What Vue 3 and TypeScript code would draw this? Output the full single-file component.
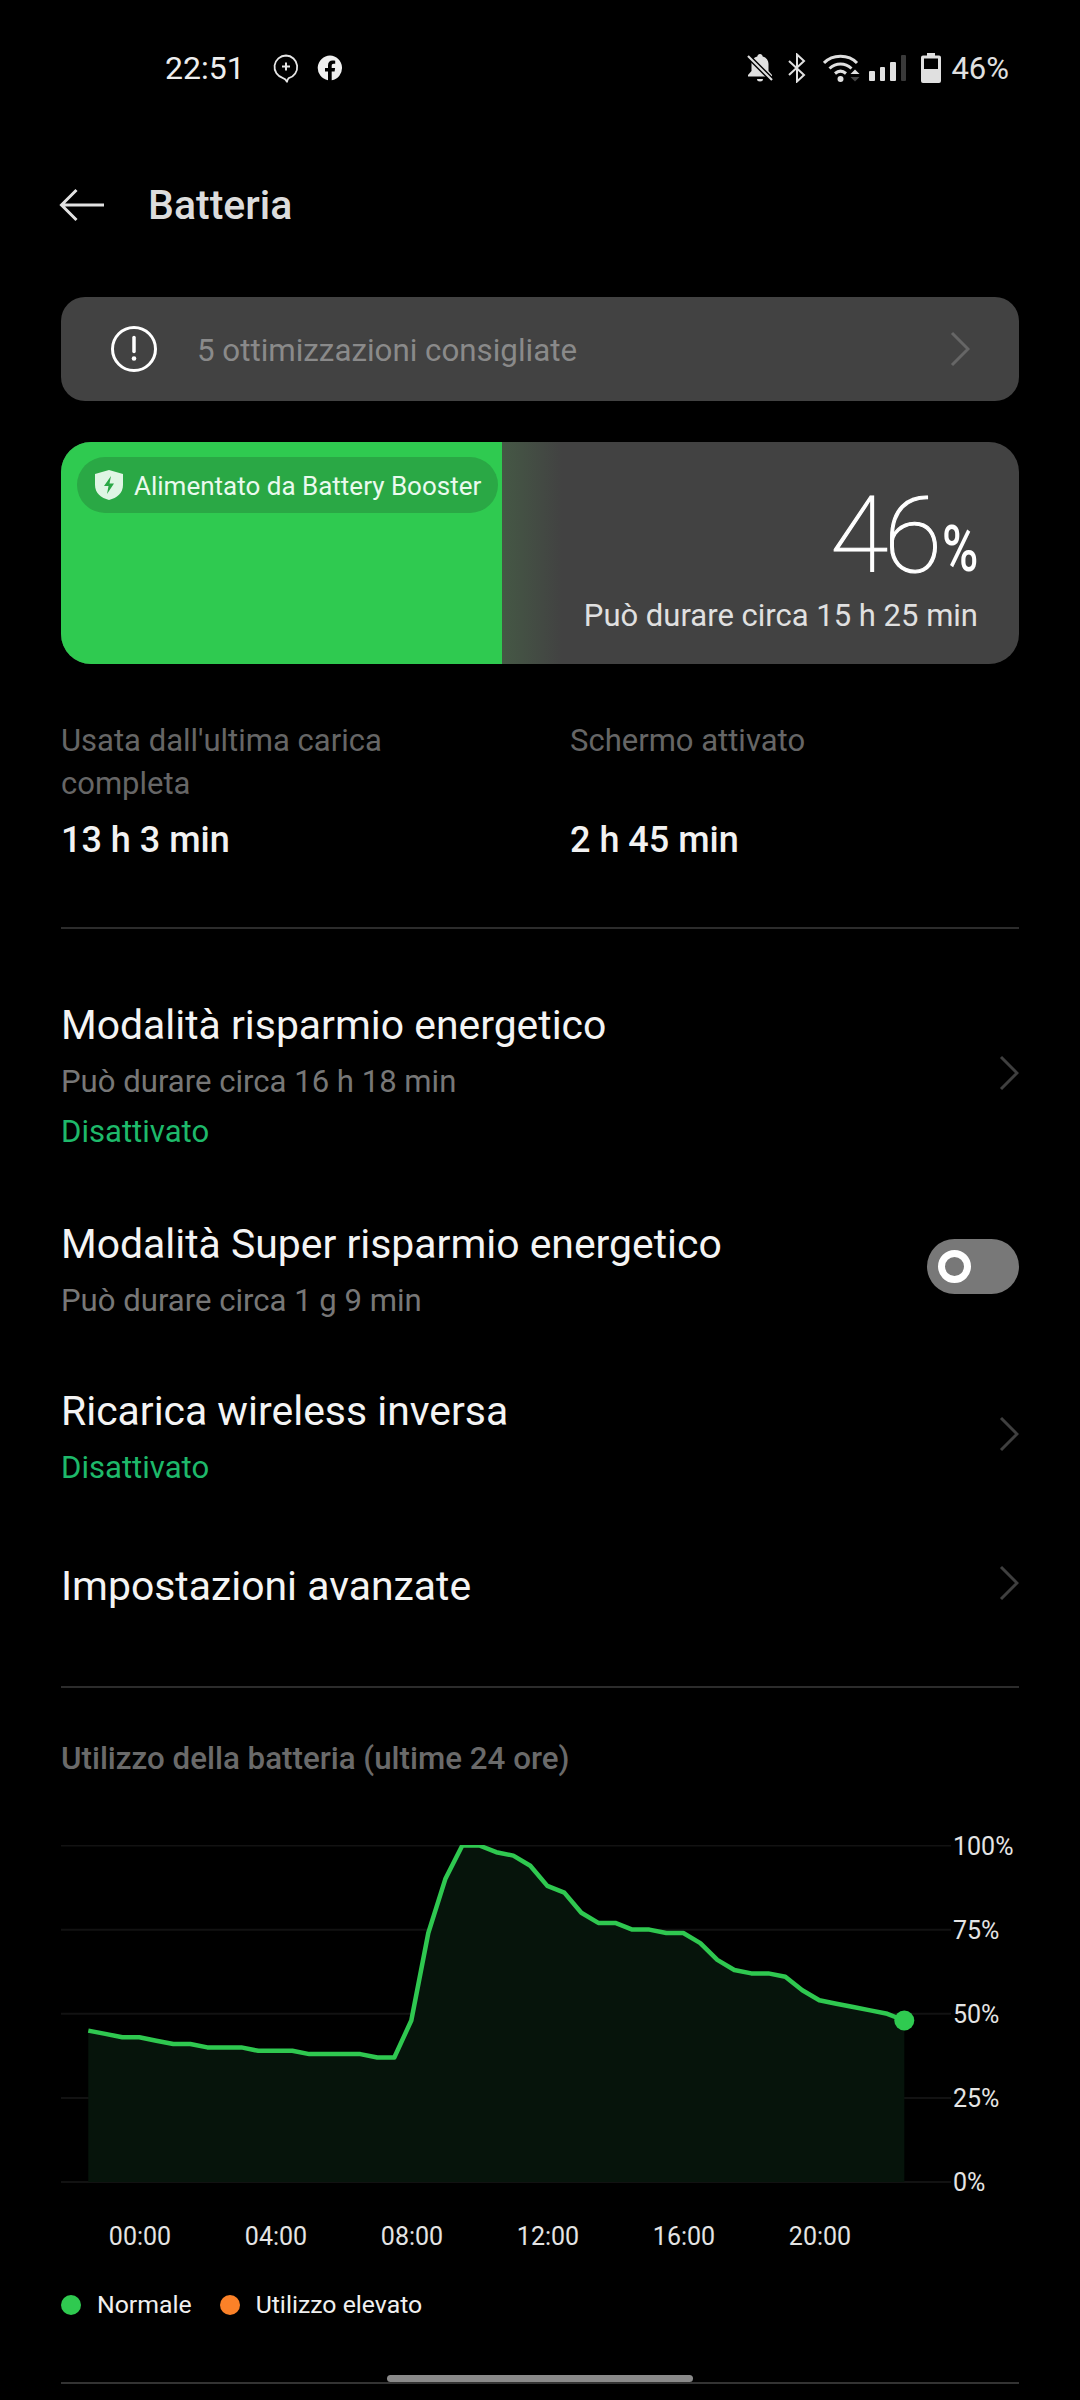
<script setup lang="ts">
const pcts = [45,44,43,43,42,41,41,40,40,40,39,39,39,38,38,38,38,37,37,48,74,90,100,100,98,97,94,88,86,80,77,77,75,75,74,74,71,66,63,62,62,61,57,54,53,52,51,50,48];
const X0 = 27.3;
const STEP = 17;
const base = 337;
const yOf = (p: number) => base - 3.365 * p;
const pts = pcts.map((p, i) => [X0 + STEP * i, yOf(p)] as const);
const line = pts.map(([x, y]) => `${x.toFixed(1)},${y.toFixed(1)}`).join(' ');
const last = pts[pts.length - 1];
const area = `${line} ${last[0].toFixed(1)},${base} ${X0},${base}`;
const grids = [100, 75, 50, 25, 0].map((p) => ({ p, y: yOf(p) }));
const hours = ['00:00', '04:00', '08:00', '12:00', '16:00', '20:00'];
</script>

<template>
  <div class="page">
    <header class="status">
      <div class="status-left">
        <span class="time">22:51</span>
        <svg class="st-msg" viewBox="0 0 26 30" width="26" height="30">
          <path d="M13 1.500a11.500 11.500 0 0 0-3 22.600c1.600.4 3 1.900 4 3.600.3-1.500.9-2.800 1.700-3.600A11.500 11.500 0 0 0 13 1.500z" fill="none" stroke="#e6e6e6" stroke-width="1.800" stroke-linejoin="round"/>
          <path d="M13 8.500v8M9 12.500h8" stroke="#e6e6e6" stroke-width="2"/>
        </svg>
        <svg class="st-fb" viewBox="0 0 26 26" width="26" height="26">
          <path fill="#f0f0f0" d="M13 .5a12.500 12.500 0 0 0-2 24.800v-8.700H8v-3.600h3V10.300c0-3 1.800-4.700 4.500-4.700 1.300 0 2.700.2 2.700.2v3h-1.500c-1.500 0-2 .9-2 1.900v2.300h3.400l-.5 3.600h-2.900v8.700A12.500 12.500 0 0 0 13 .5z"/>
        </svg>
      </div>
      <div class="status-right">
        <svg viewBox="0 0 26 30" width="26" height="30" class="st-bell">
          <path fill="#e0e0e0" d="M13 1c1.500 0 2.500 1 2.700 2.400 3.800 1 5.800 4 5.800 7.600v7l3.500 4v1.500H1V22l3.500-4v-7c0-3.600 2-6.600 5.800-7.600C10.500 2 11.500 1 13 1zM10 26h6a3 2.500 0 0 1-6 0z"/>
          <path d="M1 3l24 24" stroke="#000" stroke-width="5"/>
          <path d="M1 3l24 24" stroke="#e0e0e0" stroke-width="2.200"/>
        </svg>
        <svg viewBox="0 0 18 30" width="18" height="30" class="st-bt">
          <path d="M1 8l15 14-7 6.500V1.500L16 8 1 22" fill="none" stroke="#e0e0e0" stroke-width="2"/>
        </svg>
        <svg viewBox="0 0 37 30" width="37" height="30" class="st-wifi">
          <path d="M1 10C9.500 1 25.500 1 34 10" fill="none" stroke="#e0e0e0" stroke-width="3"/>
          <path d="M6.500 15.500c6.500-6 15.500-6 22 0" fill="none" stroke="#e0e0e0" stroke-width="3"/>
          <path d="M12 20.500c3.500-3 7.500-3 11 0" fill="none" stroke="#e0e0e0" stroke-width="3"/>
          <circle cx="17.500" cy="26" r="3" fill="#e0e0e0"/>
          <path d="M27.500 21l4.500-4.500 4.500 4.500z" fill="#e0e0e0"/>
          <path d="M27.500 24l4.500 4.500 4.500-4.500z" fill="#444"/>
        </svg>
        <div class="st-signal">
          <i class="b1"></i><i class="b2"></i><i class="b3"></i><i class="b4"></i>
        </div>
        <svg viewBox="0 0 20 30" width="20" height="30" class="st-batt">
          <path fill="#e0e0e0" d="M6 0h8v2.500h4a2 2 0 0 1 2 2V28a2 2 0 0 1-2 2H2a2 2 0 0 1-2-2V4.500a2 2 0 0 1 2-2h4z"/>
          <rect x="3" y="5.500" width="14" height="10.500" fill="#000"/>
        </svg>
        <span class="st-pct">46%</span>
      </div>
    </header>

    <nav class="nav">
      <svg class="back" viewBox="0 0 46 36" width="46" height="36">
        <path d="M45 18H3M17.500 3 2.500 18l15 15" fill="none" stroke="#e2e2e2" stroke-width="3"/>
      </svg>
      <h1 class="title">Batteria</h1>
    </nav>

    <section class="advice">
      <svg viewBox="0 0 48 48" width="48" height="48" class="advice-ico">
        <circle cx="24" cy="24" r="21.500" fill="none" stroke="#fff" stroke-width="3"/>
        <path d="M24 12.500v14" stroke="#fff" stroke-width="3.500" stroke-linecap="round"/>
        <circle cx="24" cy="33.500" r="2.300" fill="#fff"/>
      </svg>
      <span class="advice-text">5 ottimizzazioni consigliate</span>
      <svg class="chev" viewBox="0 0 20 36" width="20" height="36"><path d="M2 2l16 16L2 34" fill="none" stroke="#666" stroke-width="3"/></svg>
    </section>

    <section class="battery">
      <div class="fill">
        <div class="pill">
          <svg viewBox="0 0 30 32" width="30" height="32">
            <path d="M15 1l14 4v11c0 8-6 13-14 15C7 29 1 24 1 16V5z" fill="#dff5e4"/>
            <path d="M17 7l-7 10h4.500l-1.500 8 7-10.500h-4.500z" fill="#2aa845"/>
          </svg>
          <span>Alimentato da Battery Booster</span>
        </div>
      </div>
      <div class="fade"></div>
      <div class="batt-info">
        <div class="big"><span class="num">46</span><span class="sym">%</span></div>
        <div class="can">Può durare circa 15 h 25 min</div>
      </div>
    </section>

    <section class="stats">
      <div class="stat">
        <div class="stat-label">Usata dall'ultima carica completa</div>
        <div class="stat-val">13 h 3 min</div>
      </div>
      <div class="stat">
        <div class="stat-label">Schermo attivato</div>
        <div class="stat-val">2 h 45 min</div>
      </div>
    </section>

    <hr class="rule rule-one" />

    <section class="rows">
      <div class="row row-a">
        <div class="row-body">
          <div class="row-title">Modalità risparmio energetico</div>
          <div class="row-sub">Può durare circa 16 h 18 min</div>
          <div class="row-status">Disattivato</div>
        </div>
        <svg class="chev" viewBox="0 0 20 36" width="20" height="36"><path d="M2 2l16 16L2 34" fill="none" stroke="#3f3f3f" stroke-width="3"/></svg>
      </div>
      <div class="row row-b">
        <div class="row-body">
          <div class="row-title">Modalità Super risparmio energetico</div>
          <div class="row-sub">Può durare circa 1 g 9 min</div>
        </div>
        <div class="toggle"><span class="knob"></span></div>
      </div>
      <div class="row row-c">
        <div class="row-body">
          <div class="row-title">Ricarica wireless inversa</div>
          <div class="row-sub green-t">Disattivato</div>
        </div>
        <svg class="chev" viewBox="0 0 20 36" width="20" height="36"><path d="M2 2l16 16L2 34" fill="none" stroke="#3f3f3f" stroke-width="3"/></svg>
      </div>
      <div class="row row-d">
        <div class="row-body">
          <div class="row-title">Impostazioni avanzate</div>
        </div>
        <svg class="chev" viewBox="0 0 20 36" width="20" height="36"><path d="M2 2l16 16L2 34" fill="none" stroke="#3f3f3f" stroke-width="3"/></svg>
      </div>
    </section>

    <hr class="rule rule-two" />

    <section class="usage">
      <h2 class="usage-title">Utilizzo della batteria (ultime 24 ore)</h2>
      <div class="chart">
        <svg class="plot" viewBox="0 0 890 340" width="890" height="340">
          <line v-for="g in grids" :key="g.p" x1="0" x2="890" :y1="g.y" :y2="g.y" stroke="#121212" stroke-width="2"/>
          <polygon :points="area" fill="#06140b"/>
          <polyline :points="line" fill="none" stroke="#2fc850" stroke-width="4.500" stroke-linejoin="round"/>
          <circle :cx="last[0]" :cy="last[1]" r="10" fill="#2fca50"/>
        </svg>
        <div class="yaxis">
          <span v-for="g in grids" :key="g.p" :style="{ top: g.y - 14 + 'px' }">{{ g.p }}%</span>
        </div>
      </div>
      <div class="xaxis">
        <span v-for="h in hours" :key="h">{{ h }}</span>
      </div>
      <div class="legend">
        <i class="dot green"></i><span class="leg-t">Normale</span>
        <i class="dot orange"></i><span>Utilizzo elevato</span>
      </div>
      <hr class="rule rule-three" />
    </section>

    <div class="homebar"></div>
  </div>
</template>

<style>
html, body { margin: 0; background: #000; }
</style>

<style scoped>
.page {
  position: relative;
  width: 1080px;
  height: 2400px;
  overflow: hidden;
  background: #000;
  color: #fff;
  font-family: Roboto, "Liberation Sans", sans-serif;
  box-sizing: border-box;
  padding: 0 61px;
}
.status {
  display: flex;
  justify-content: space-between;
  align-items: center;
  height: 136px;
  margin-right: 10px;
}
.status-left { display: flex; align-items: center; padding-left: 104px; }
.time { font-size: 32px; color: #eee; }
.st-msg { margin-left: 28px; margin-top: 2px; }
.st-fb { margin-left: 18px; }
.status-right { display: flex; align-items: center; }
.st-bell { margin-right: 15px; }
.st-bt { margin-right: 17px; }
.st-wifi { margin-right: 9px; }
.st-signal { display: flex; align-items: flex-end; gap: 5px; height: 26px; margin-right: 15px; }
.st-signal i { display: block; width: 5.500px; border-radius: 1px; background: #e0e0e0; }
.b1 { height: 10px; }
.b2 { height: 14px; }
.b3 { height: 19px; }
.b4 { height: 26px; background: #3a3a3a !important; }
.st-batt { margin-right: 10px; }
.st-pct { font-size: 31px; color: #e0e0e0; }

.nav { display: flex; align-items: center; height: 68px; margin-top: 35px; }
.back { margin-left: -2px; }
.title { margin: 0 0 0 43px; font-size: 41px; line-height: 70px; font-weight: 500; color: #dcdcdc; }

.advice {
  display: flex;
  align-items: center;
  height: 104px;
  margin-top: 58px;
  padding: 0 49px;
  border-radius: 24px;
  background: #424242;
}
.advice-ico { flex: none; }
.advice-text { flex: 1; margin-left: 39px; padding-top: 3px; font-size: 31.300px; line-height: 38px; color: #8a8a8a; }

.battery {
  position: relative;
  display: flex;
  height: 222px;
  margin-top: 41px;
  border-radius: 30px;
  overflow: hidden;
  background: #424242;
}
.fill { flex: none; width: 441px; background: #2fca50; padding: 15px 0 0 16px; box-sizing: border-box; }
.pill {
  display: flex;
  align-items: center;
  width: 421px;
  height: 56px;
  border-radius: 28px;
  background: #2aa845;
  padding-left: 17px;
  box-sizing: border-box;
  font-size: 26px;
  line-height: 34px;
  color: #eafaee;
  white-space: nowrap;
}
.pill span { margin-left: 10px; padding-top: 2px; }
.fade { flex: none; width: 60px; background: linear-gradient(90deg, #455845, #424242); }
.batt-info { flex: 1; display: flex; flex-direction: column; align-items: flex-end; padding-right: 41px; }
.big { display: flex; align-items: baseline; height: 130px; line-height: 189px; }
.num { font-size: 106px; font-weight: 100; -webkit-text-stroke: 1.100px #fff; color: #fff; letter-spacing: -4px; }
.sym { display: inline-block; width: 36px; margin-left: 4px; font-size: 65px; font-weight: 500; color: #fff; transform: scaleX(0.76) translateY(-1px); transform-origin: left bottom; }
.can { margin-top: 26px; font-size: 31px; line-height: 36px; color: #e0e0e0; white-space: nowrap; }

.stats { display: grid; grid-template-columns: 509px 1fr; margin-top: 55px; }
.stat-label { width: 400px; font-size: 31px; line-height: 43px; color: #666; }
.stat-val { margin-top: 13px; font-size: 36px; line-height: 44px; font-weight: 500; color: #f2f2f2; }
.stats .stat:last-child .stat-val { margin-top: 56px; }

.rule { border: 0; margin: 0; height: 2px; background: #2c2c2c; }
.rule-one { margin-top: 65px; }

.rows { display: flex; flex-direction: column; }
.row { display: flex; align-items: center; justify-content: space-between; }
.row-a { margin-top: 70px; }
.row-b { margin-top: 66px; }
.row-c { margin-top: 64px; }
.row-d { margin-top: 72px; }
.row-title { font-size: 40.900px; line-height: 52px; color: #f4f4f4; }
.row-sub { margin-top: 11px; font-size: 31.100px; line-height: 40px; color: #777; }
.row-status { margin-top: 10px; font-size: 31.100px; line-height: 40px; color: #1eb96a; }
.green-t { color: #1eb96a; }
.toggle { position: relative; width: 92px; height: 55px; margin-bottom: 6px; border-radius: 28px; background: #787878; }
.knob { position: absolute; left: 11px; top: 11px; width: 33px; height: 33px; box-sizing: border-box; border: 7px solid #fff; border-radius: 50%; background: #787878; }
.chev { flex: none; }
.row .chev { margin-bottom: 6px; }

.rule-two { margin-top: 74px; }
.usage-title { margin: 0; padding-top: 51px; font-size: 31.300px; line-height: 40px; font-weight: 500; color: #6a6a6a; }
.chart { position: relative; margin-top: 66px; height: 340px; }
.plot { display: block; }
.yaxis { position: absolute; left: 892px; top: 0; width: 70px; height: 340px; }
.yaxis span { position: absolute; left: 0; font-size: 25px; line-height: 30px; color: #e4e4e4; }
.xaxis { display: flex; margin-top: 35px; padding-left: 47px; gap: 72px; font-size: 25px; line-height: 34px; color: #e4e4e4; }
.xaxis span { width: 64px; text-align: center; }
.legend { display: flex; align-items: center; margin-top: 34px; font-size: 24.800px; line-height: 34px; color: #f0f0f0; }
.dot { display: block; width: 20px; height: 20px; border-radius: 50%; margin-right: 16px; }
.green { background: #2fca50; }
.orange { background: #fb8128; }
.leg-t { margin-right: 28px; }
.rule-three { margin-top: 60px; background: #333; }

.homebar { position: absolute; left: 387px; top: 2375px; width: 306px; height: 7px; border-radius: 4px; background: #8a8a8a; }
</style>
